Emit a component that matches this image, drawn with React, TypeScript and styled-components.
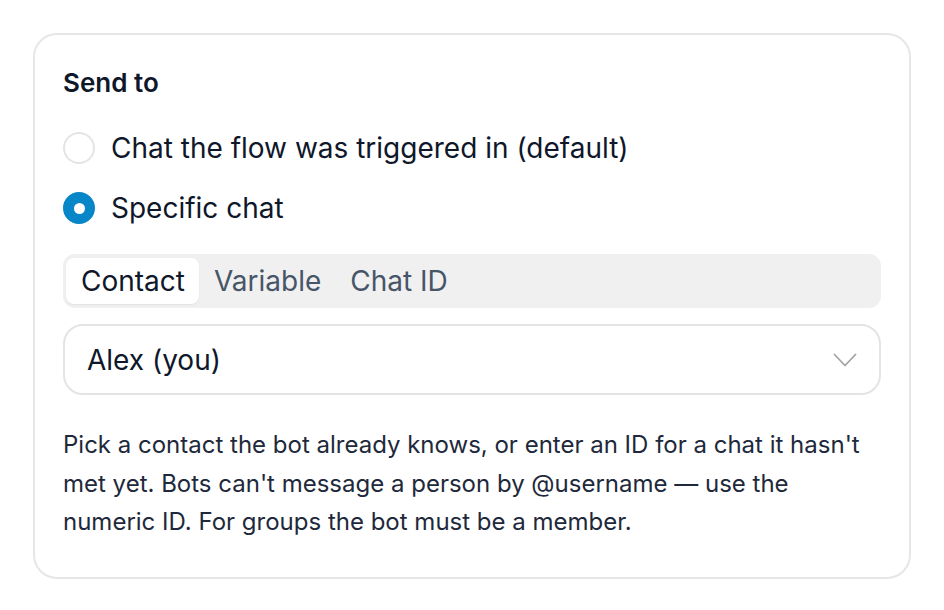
import React, { useState } from "react";
import styled, { createGlobalStyle } from "styled-components";

const Global = createGlobalStyle`
  html, body { margin: 0; padding: 0; background: #ffffff; }
  body { font-family: Inter, "Noto Sans", sans-serif; -webkit-font-smoothing: antialiased; }
  * { box-sizing: border-box; }
`;

const Page = styled.div`
  padding: 33px 33px;
  width: 944px;
`;

const Card = styled.div`
  width: 878px;
  border: 2px solid #e6e6e9;
  border-radius: 24px;
  padding: 28px 28px 35px 28px;
  display: flex;
  flex-direction: column;
  background: #fff;
`;

const Title = styled.div`
  font-size: 26px;
  font-weight: 600;
  line-height: 40px;
  color: #0f172a;
`;

const RadioGroup = styled.div`
  display: flex;
  flex-direction: column;
  gap: 16px;
  margin-top: 23px;
`;

const RadioRow = styled.label`
  display: flex;
  align-items: center;
  gap: 16px;
  height: 44px;
  cursor: pointer;
`;

const RadioCircle = styled.span<{ $checked: boolean }>`
  width: 32px;
  height: 32px;
  border-radius: 50%;
  flex: none;
  display: flex;
  align-items: center;
  justify-content: center;
  background: ${(p) => (p.$checked ? "#0786c8" : "#fff")};
  border: 2px solid ${(p) => (p.$checked ? "#0786c8" : "#e4e4e7")};
  &::after {
    content: "";
    display: ${(p) => (p.$checked ? "block" : "none")};
    width: 11px;
    height: 11px;
    border-radius: 50%;
    background: #fff;
  }
`;

const RadioLabel = styled.span`
  font-size: 28px;
  color: #0f172a;
  line-height: 44px;
`;

const Tabs = styled.div`
  margin-top: 24px;
  height: 54px;
  background: #f0f0f0;
  border-radius: 12px;
  padding: 4px 3px;
  display: flex;
  align-items: stretch;
`;

const Tab = styled.button<{ $active: boolean }>`
  border: none;
  font-family: inherit;
  font-size: 28px;
  padding: 0 14px 0 15px;
  border-radius: 8px;
  cursor: pointer;
  background: ${(p) => (p.$active ? "#ffffff" : "transparent")};
  color: ${(p) => (p.$active ? "#0f172a" : "#475569")};
  box-shadow: ${(p) => (p.$active ? "0 1px 2px rgba(0,0,0,0.06)" : "none")};
`;

const Select = styled.div`
  margin-top: 16px;
  height: 71px;
  border: 2px solid #e4e4e7;
  border-radius: 20px;
  display: flex;
  align-items: center;
  justify-content: space-between;
  padding: 0 22px 0 22px;
`;

const SelectValue = styled.span`
  font-size: 28px;
  color: #0f172a;
`;

const Help = styled.p`
  margin: 31px 0 0 0;
  font-size: 24px;
  line-height: 38.5px;
  color: #1e293b;
`;

export default function App() {
  const [mode, setMode] = useState("specific");
  const [tab, setTab] = useState("Contact");
  return (
    <>
      <Global />
      <Page>
        <Card>
          <Title>Send to</Title>
          <RadioGroup>
            <RadioRow onClick={() => setMode("default")}>
              <RadioCircle $checked={mode === "default"} />
              <RadioLabel>Chat the flow was triggered in (default)</RadioLabel>
            </RadioRow>
            <RadioRow onClick={() => setMode("specific")}>
              <RadioCircle $checked={mode === "specific"} />
              <RadioLabel>Specific chat</RadioLabel>
            </RadioRow>
          </RadioGroup>
          <Tabs>
            {["Contact", "Variable", "Chat ID"].map((t) => (
              <Tab key={t} $active={tab === t} onClick={() => setTab(t)}>
                {t}
              </Tab>
            ))}
          </Tabs>
          <Select>
            <SelectValue>Alex (you)</SelectValue>
            <svg width="24" height="16" viewBox="0 0 24 16" fill="none">
              <path d="M1.5 2.5 L12 13.5 L22.5 2.5" stroke="#a3a3a3" strokeWidth="1.8" strokeLinecap="round" strokeLinejoin="round" />
            </svg>
          </Select>
          <Help>
            Pick a contact the bot already knows, or enter an ID for a chat it hasn't met yet. Bots can't message a person by @username — use the numeric ID. For groups the bot must be a member.
          </Help>
        </Card>
      </Page>
    </>
  );
}
